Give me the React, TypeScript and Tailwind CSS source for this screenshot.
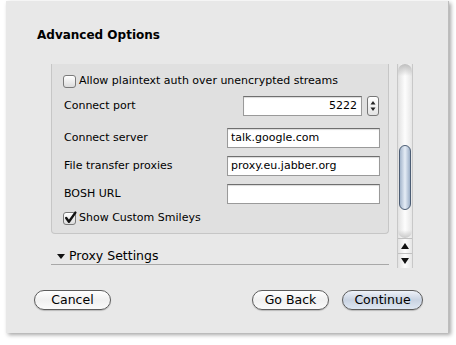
const font = { fontFamily: '"DejaVu Sans", "Liberation Sans", sans-serif' };

const Checkbox = ({ checked }: { checked?: boolean }) => (
  <span className="relative inline-block h-[13px] w-[13px] shrink-0 rounded-[3px] border border-[#7a7a7a] bg-gradient-to-b from-[#ffffff] to-[#dcdcdc] shadow-[inset_0_1px_0_#fff]">
    {checked && (
      <svg viewBox="0 0 13 13" className="absolute -left-px -top-[2px] h-[14px] w-[14px]">
        <path d="M3 6.5 L5.5 10 L11.5 1.5" fill="none" stroke="#111" strokeWidth="2.2" strokeLinecap="round" strokeLinejoin="round" />
      </svg>
    )}
  </span>
);

const Field = ({ label, value, mt }: { label: string; value: string; mt: string }) => (
  <div className={`flex h-[20px] ${mt} items-center justify-between pl-[12px] pr-[8px]`}>
    <span className="text-[11px] text-black">{label}</span>
    <div className="flex h-[20px] w-[153px] items-center border border-[#9a9a9a] border-t-[#6f6f6f] bg-white px-[3px] text-[11px] text-black shadow-[inset_0_1px_1px_rgba(0,0,0,0.15)]">
      {value}
    </div>
  </div>
);

const Button = ({ label, primary, w }: { label: string; primary?: boolean; w: string }) => (
  <div
    className={`flex h-[20px] ${w} items-center justify-center rounded-full border border-[#5c5c5c] text-[12.5px] text-black shadow-[0_1px_1px_rgba(0,0,0,0.2)] ${
      primary
        ? "bg-gradient-to-b from-[#eef2f8] via-[#c9d3e2] to-[#dfe7f2]"
        : "bg-gradient-to-b from-[#ffffff] via-[#f0f0f0] to-[#fafafa]"
    }`}
  >
    {label}
  </div>
);

export default function App() {
  return (
    <div className="h-[345px] w-[456px] bg-white pl-[6px] pt-[1px]" style={font}>
      <div className="flex h-[332px] w-[443px] flex-col border-r border-[#bdbdbd] bg-[#e8e8e8] shadow-[2px_2px_4px_rgba(0,0,0,0.35)]">
        <div className="pl-[31px] pt-[25px] text-[12px] font-bold text-black">Advanced Options</div>

        <div className="ml-[45px] mt-[20px] flex h-[204px] gap-[8px]">
          <div className="flex w-[338px] flex-col">
            <div className="flex h-[170px] flex-col rounded-b-[4px] border border-t-0 border-[#c6c6c6] bg-[#e0e0e0]">
              <div className="mt-[11px] flex h-[13px] items-center gap-[3px] pl-[11px] text-[11px] text-black">
                <Checkbox />
                <span>Allow plaintext auth over unencrypted streams</span>
              </div>
              <div className="mt-[8px] flex h-[20px] items-center justify-between pl-[12px] pr-[9px]">
                <span className="text-[11px] text-black">Connect port</span>
                <div className="flex items-center gap-[5px]">
                  <div className="flex h-[20px] w-[119px] items-center justify-end border border-[#9a9a9a] border-t-[#6f6f6f] bg-white px-[4px] text-[11px] text-black shadow-[inset_0_1px_1px_rgba(0,0,0,0.15)]">
                    5222
                  </div>
                  <div className="flex h-[20px] w-[12px] flex-col items-center justify-center rounded-[3px] border border-[#777] bg-gradient-to-b from-white to-[#e4e4e4]">
                    <svg viewBox="0 0 6 14" className="h-[14px] w-[6px]">
                      <path d="M3 2 L5.5 5.5 L0.5 5.5 Z" fill="#222" />
                      <path d="M3 12 L5.5 8.5 L0.5 8.5 Z" fill="#222" />
                    </svg>
                  </div>
                </div>
              </div>
              <Field label="Connect server" value="talk.google.com" mt="mt-[12px]" />
              <Field label="File transfer proxies" value="proxy.eu.jabber.org" mt="mt-[8px]" />
              <Field label="BOSH URL" value="" mt="mt-[8px]" />
              <div className="mt-[8px] flex h-[13px] items-center gap-[3px] pl-[11px] text-[11px] text-black">
                <Checkbox checked />
                <span>Show Custom Smileys</span>
              </div>
            </div>
            <div className="mt-[12px] flex h-[19px] items-center gap-[4px] border-b border-[#a8a8a8] pl-[6px] pt-[3px] text-[12.5px] text-black">
              <svg viewBox="0 0 8 6" className="h-[6px] w-[8px]">
                <path d="M0 0 L8 0 L4 5 Z" fill="#111" />
              </svg>
              <span>Proxy Settings</span>
            </div>
          </div>

          <div className="flex w-[16px] flex-col border-x border-[#c8c8c8] bg-gradient-to-r from-[#e2e2e2] via-[#fdfdfd] to-[#e6e6e6]">
            <div className="h-[12px] rounded-t-full bg-gradient-to-b from-[#bdbdbd] to-transparent" />
            <div className="flex-1 pt-[69px]">
              <div className="mx-[1px] h-[65px] rounded-full border border-[#4c5d74] bg-gradient-to-r from-[#a5b6cc] via-[#e6edf6] to-[#9eb0c8]" />
            </div>
            <div className="h-[8px] rounded-b-full bg-gradient-to-t from-[#c8c8c8] to-transparent" />
            <div className="flex h-[15px] items-center justify-center border-t border-[#c0c0c0]">
              <svg viewBox="0 0 8 6" className="h-[6px] w-[8px]">
                <path d="M4 0 L8 6 L0 6 Z" fill="#111" />
              </svg>
            </div>
            <div className="flex h-[15px] items-center justify-center border-t border-[#c0c0c0]">
              <svg viewBox="0 0 8 6" className="h-[6px] w-[8px]">
                <path d="M0 0 L8 0 L4 6 Z" fill="#111" />
              </svg>
            </div>
          </div>
        </div>

        <div className="mt-[22px] flex items-center pl-[28px] pr-[25px]">
          <Button label="Cancel" w="w-[77px]" />
          <div className="flex-1" />
          <Button label="Go Back" w="w-[77px]" />
          <div className="w-[13px]" />
          <Button label="Continue" w="w-[81px]" primary />
        </div>
      </div>
    </div>
  );
}
